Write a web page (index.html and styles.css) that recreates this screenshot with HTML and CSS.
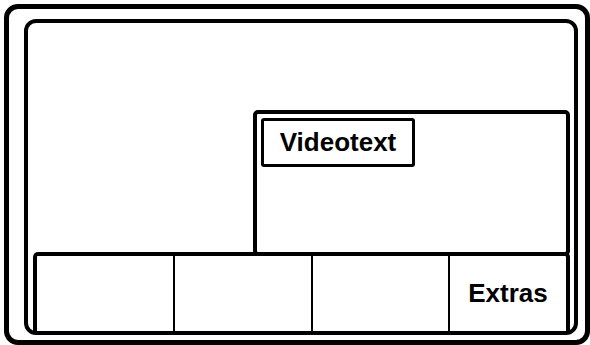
FILE: index.html
```html
<!DOCTYPE html>
<html lang="en">
<head>
    <meta charset="UTF-8">
    <meta name="viewport" content="width=device-width, initial-scale=1.0">
    <title>Menu</title>
    <link rel="stylesheet" href="styles.css">
</head>
<body>
    <div class="outer-frame">
        <div class="screen">
            <div class="top-area">
                <div class="panel">
                    <div class="panel-button">Videotext</div>
                </div>
            </div>
            <div class="menu-bar">
                <div class="menu-cell"></div>
                <div class="menu-cell"></div>
                <div class="menu-cell"></div>
                <div class="menu-cell">Extras</div>
            </div>
        </div>
    </div>
</body>
</html>
```

FILE: styles.css
```css
body {
    margin: 0;
    background-color: #fff;
    font-family: 'Liberation Sans', Arial, sans-serif;
    color: #000;
}
.outer-frame {
    box-sizing: border-box;
    width: 586px;
    height: 341px;
    margin: 4px 0 0 4px;
    border: 5px solid #000;
    border-radius: 14px;
    padding: 10px 7px 5px 15px;
}
.screen {
    box-sizing: border-box;
    height: 100%;
    border: 4px solid #000;
    border-radius: 12px;
    padding: 0 4px 0 5px;
    display: flex;
    flex-direction: column;
}
.top-area {
    flex: 1;
    display: flex;
    justify-content: flex-end;
    padding-top: 87px;
}
.panel {
    box-sizing: border-box;
    width: 317px;
    border: 4px solid #000;
    border-radius: 5px;
    margin-bottom: -4px;
    padding: 4px;
}
.panel-button {
    box-sizing: border-box;
    width: 154px;
    height: 49px;
    border: 3px solid #000;
    border-radius: 3px;
    display: flex;
    align-items: center;
    justify-content: center;
    font-size: 26px;
    font-weight: bold;
}
.menu-bar {
    box-sizing: border-box;
    height: 79px;
    border: 4px solid #000;
    border-bottom: none;
    border-radius: 5px 5px 0 0;
    display: grid;
    grid-template-columns: 136px 138px 137px 1fr;
}
.menu-cell {
    display: flex;
    align-items: center;
    justify-content: center;
    font-size: 26px;
    font-weight: bold;
}
.menu-cell + .menu-cell {
    border-left: 2px solid #000;
}
```
